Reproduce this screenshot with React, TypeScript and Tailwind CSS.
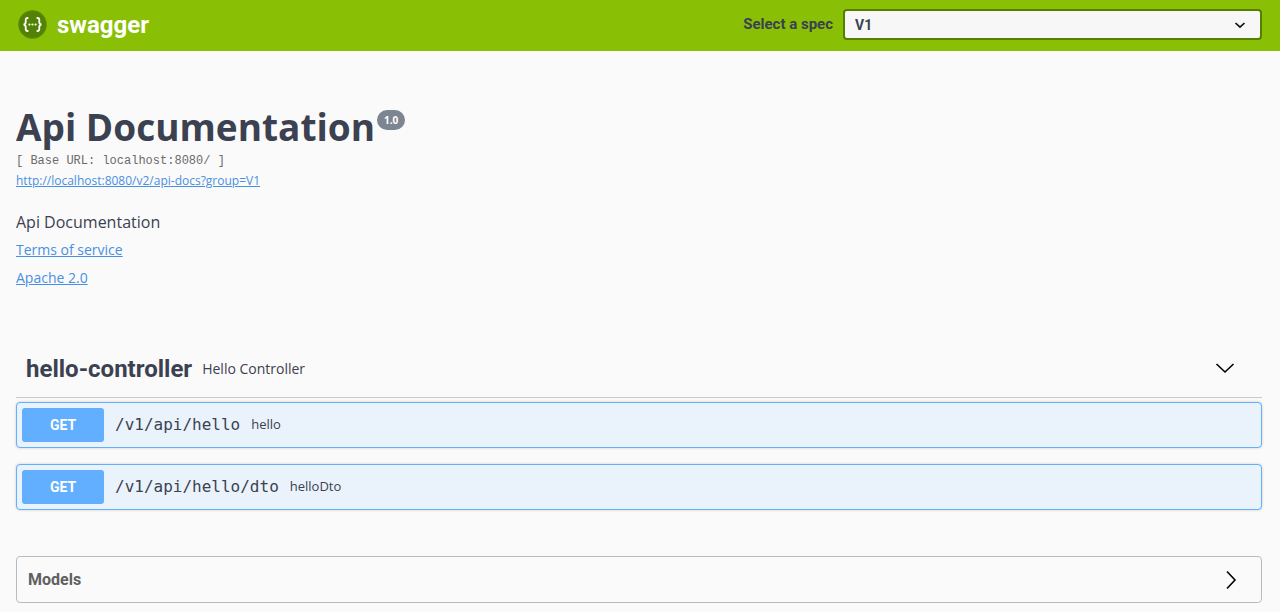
import React, { useState } from "react";

interface Operation {
  method: string;
  path: string;
  summary: string;
}

const operations: Operation[] = [
  { method: "GET", path: "/v1/api/hello", summary: "hello" },
  { method: "GET", path: "/v1/api/hello/dto", summary: "helloDto" },
];

const Logo: React.FC = () => (
  <svg className="w-[29px] h-[29px]" viewBox="0 0 29 29" fill="none" aria-hidden="true">
    <circle cx="14.5" cy="14.5" r="14.3" fill="#5a8a06" />
    <circle cx="14.5" cy="14.5" r="13" fill="#528203" />
    <path
      d="M10.4 8H9.4C8.2 8 7.7 8.7 7.7 9.9V12.2C7.7 13.6 7 14.3 5.6 14.5C7 14.7 7.7 15.4 7.7 16.8V19.1C7.7 20.4 8.2 21 9.4 21H10.4M18.6 8H19.6C20.8 8 21.3 8.7 21.3 9.9V12.2C21.3 13.6 22 14.3 23.4 14.5C22 14.7 21.3 15.4 21.3 16.8V19.1C21.3 20.4 20.8 21 19.6 21H18.6"
      stroke="#fff"
      strokeWidth="1.8"
    />
    <circle cx="11.4" cy="14.5" r="1.1" fill="#fff" />
    <circle cx="14.5" cy="14.5" r="1.1" fill="#fff" />
    <circle cx="17.6" cy="14.5" r="1.1" fill="#fff" />
  </svg>
);

const Arrow: React.FC<{ open: boolean }> = ({ open }) => (
  <svg className="w-5 h-5" viewBox="0 0 20 20" fill="none" stroke="#000" strokeWidth="1.6" aria-hidden="true">
    <path d={open ? "M1.5 5L10 13L18.5 5" : "M6 1.5L14 10L6 18.5"} />
  </svg>
);

const Topbar: React.FC = () => {
  const [spec, setSpec] = useState("V1");

  return (
    <header className="bg-[#89bf04] font-['Roboto',sans-serif]">
      <div className="flex items-center justify-between h-[51px] pl-[18px] pr-[18px] pb-0.5">
        <a href="#" className="flex items-center gap-2.5 text-white text-2xl leading-7 font-bold">
          <Logo />
          <span>swagger</span>
        </a>
        <div className="flex items-center gap-2.5 w-[42%] min-w-[260px] justify-end">
          <label htmlFor="spec" className="shrink-0 text-[15px] font-bold text-[#3b4151]">
            Select a spec
          </label>
          <div className="grid items-center grow max-w-[419px]">
            <select
              id="spec"
              value={spec}
              onChange={(e) => setSpec(e.target.value)}
              className="col-start-1 row-start-1 w-full h-[31px] appearance-none rounded-[4px] border-2 border-[#547f00] bg-[#f7f7f7] pl-2.5 pr-10 text-sm font-bold text-[#3b4151]"
            >
              <option value="V1">V1</option>
            </select>
            <svg
              className="col-start-1 row-start-1 justify-self-end mr-4 w-3 h-3 pointer-events-none"
              viewBox="0 0 12 12"
              fill="none"
              stroke="#111"
              strokeWidth="1.7"
              aria-hidden="true"
            >
              <path d="M1.5 4L6 8.2L10.5 4" />
            </svg>
          </div>
        </div>
      </div>
    </header>
  );
};

const Info: React.FC = () => (
  <section className="pt-14">
    <div className="flex items-start gap-0.5">
      <h1 className="text-[37px] leading-10 font-bold text-[#3b4151]">Api Documentation</h1>
      <span className="mt-[3px] h-5 rounded-full bg-[#7d8492] px-[7px] text-[10px] leading-5 font-bold text-white">
        1.0
      </span>
    </div>
    <pre className="pt-1 font-['Liberation_Mono',monospace] text-xs leading-5 text-[#6b6b6b]">
      [ Base URL: localhost:8080/ ]
    </pre>
    <a href="#docs" className="block w-fit text-xs leading-5 text-[#4990e2] underline">
      http://localhost:8080/v2/api-docs?group=V1
    </a>
    <p className="pt-[19px] text-base leading-6 text-[#3b4151]">Api Documentation</p>
    <a href="#terms" className="block w-fit mt-1 text-sm leading-6 text-[#4990e2] underline">
      Terms of service
    </a>
    <a href="#license" className="block w-fit mt-1 text-sm leading-6 text-[#4990e2] underline">
      Apache 2.0
    </a>
  </section>
);

const OperationRow: React.FC<{ op: Operation }> = ({ op }) => (
  <button className="flex items-center w-full h-[46px] p-[5px] rounded-[4px] border border-[#61affe] bg-[#eaf3fb] text-left shadow-[0_0_3px_rgba(0,0,0,0.19)]">
    <span className="w-[82px] h-[34px] shrink-0 rounded-[3px] bg-[#61affe] text-center font-['Roboto',sans-serif] text-sm leading-[34px] font-bold text-white">
      {op.method}
    </span>
    <span className="pl-[11px] font-['DejaVu_Sans_Mono',monospace] text-base text-[#3b4151]">{op.path}</span>
    <span className="pl-[11px] text-[13px] text-[#3b4151]">{op.summary}</span>
  </button>
);

const App: React.FC = () => {
  const [tagOpen, setTagOpen] = useState(true);
  const [modelsOpen, setModelsOpen] = useState(false);

  return (
    <div className="min-h-screen bg-[#fafafa] font-['Open_Sans',sans-serif]">
      <Topbar />
      <main className="pl-4 pr-[18px] pb-2.5">
        <Info />
        <section className="mt-[50px]">
          <h2 className="border-b border-[#c8c8cf]">
            <button
              onClick={() => setTagOpen(!tagOpen)}
              className="flex items-center w-full h-[57px] pl-2.5 pr-[27px] text-left text-[#3b4151]"
              aria-expanded={tagOpen}
            >
              <span className="font-['Roboto',sans-serif] text-2xl font-bold">hello-controller</span>
              <span className="pl-2.5 flex-1 text-sm">Hello Controller</span>
              <Arrow open={tagOpen} />
            </button>
          </h2>
          {tagOpen && (
            <div className="flex flex-col gap-4 pt-1">
              {operations.map((op) => (
                <OperationRow key={op.path} op={op} />
              ))}
            </div>
          )}
        </section>
        <section className="mt-[46px] rounded-[4px] border border-[#b9bbc1]">
          <button
            onClick={() => setModelsOpen(!modelsOpen)}
            className="flex items-center justify-between w-full h-[45px] pl-[11px] pr-5 text-base text-[#606060]"
            aria-expanded={modelsOpen}
          >
            <span className="font-['Roboto',sans-serif] font-bold">Models</span>
            <Arrow open={modelsOpen} />
          </button>
        </section>
      </main>
    </div>
  );
};

export default App;
